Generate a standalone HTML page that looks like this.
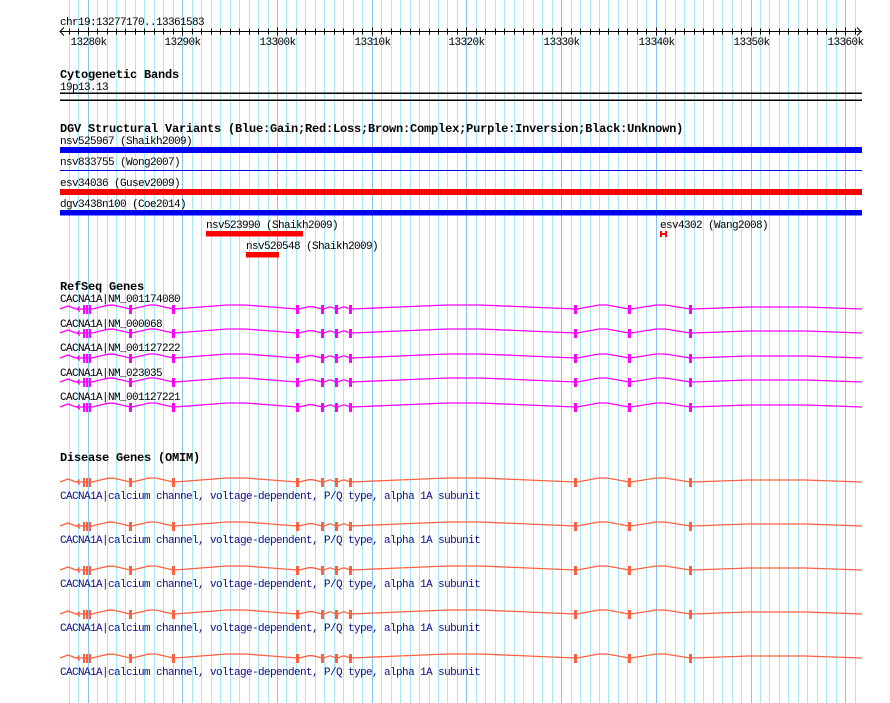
<!DOCTYPE html>
<html><head><meta charset="utf-8"><style>
html,body{margin:0;padding:0;background:#fff;width:890px;height:703px;overflow:hidden}
svg{display:block}
text{font-family:"Liberation Mono",monospace;font-size:11px;letter-spacing:-0.6px}
.b{font-weight:bold;font-size:12px;letter-spacing:-0.2px}
.d{fill:#10108a}
</style></head><body>
<svg id="s" width="890" height="703" xmlns="http://www.w3.org/2000/svg">
<g id="grid"></g>
<text x="60" y="25">chr19:13277170..13361583</text>
<line x1="60" y1="31.5" x2="862" y2="31.5" stroke="#000"/>
<polyline points="64,27.5 60,31.5 64,35.5" fill="none" stroke="#000"/>
<polyline points="857,27.5 861,31.5 857,35.5" fill="none" stroke="#000"/>
<g id="ruler"></g>
<text class="b" x="60" y="78">Cytogenetic Bands</text>
<text x="60" y="90">19p13.13</text>
<rect x="60" y="92.5" width="802" height="1.5" fill="#000"/>
<rect x="60" y="99.5" width="802" height="1.5" fill="#000"/>
<text class="b" x="60" y="132">DGV Structural Variants (Blue:Gain;Red:Loss;Brown:Complex;Purple:Inversion;Black:Unknown)</text>
<text x="60" y="144">nsv525967 (Shaikh2009)</text>
<rect x="60" y="147" width="802" height="6" fill="#0000f0"/>
<text x="60" y="165">nsv833755 (Wong2007)</text>
<rect x="60" y="170" width="802" height="1" fill="#0000f0"/>
<text x="60" y="186">esv34036 (Gusev2009)</text>
<rect x="60" y="189" width="802" height="6" fill="#f00"/>
<text x="60" y="207">dgv3438n100 (Coe2014)</text>
<rect x="60" y="210" width="802" height="5.5" fill="#0000f0"/>
<text x="206" y="228">nsv523990 (Shaikh2009)</text>
<rect x="206" y="231" width="97" height="5.5" fill="#f00"/>
<text x="246" y="249">nsv520548 (Shaikh2009)</text>
<rect x="246" y="252" width="33" height="5.5" fill="#f00"/>
<text x="660" y="228">esv4302 (Wang2008)</text>
<g fill="#f00"><rect x="660" y="231" width="2" height="6"/><rect x="665" y="231" width="2" height="6"/><rect x="660" y="233" width="7" height="2"/></g>
<text class="b" x="60" y="290">RefSeq Genes</text>
<text x="60" y="302">CACNA1A|NM_001174080</text>
<text x="60" y="327">CACNA1A|NM_000068</text>
<text x="60" y="351">CACNA1A|NM_001127222</text>
<text x="60" y="376">CACNA1A|NM_023035</text>
<text x="60" y="400">CACNA1A|NM_001127221</text>
<text class="b" x="60" y="461">Disease Genes (OMIM)</text>
<text class="d" x="60" y="499">CACNA1A|calcium channel, voltage-dependent, P/Q type, alpha 1A subunit</text>
<text class="d" x="60" y="543">CACNA1A|calcium channel, voltage-dependent, P/Q type, alpha 1A subunit</text>
<text class="d" x="60" y="587">CACNA1A|calcium channel, voltage-dependent, P/Q type, alpha 1A subunit</text>
<text class="d" x="60" y="631">CACNA1A|calcium channel, voltage-dependent, P/Q type, alpha 1A subunit</text>
<text class="d" x="60" y="675">CACNA1A|calcium channel, voltage-dependent, P/Q type, alpha 1A subunit</text>
<g id="genes"></g>
</svg>
<script>
var NS="http://www.w3.org/2000/svg";
function el(p,t,a){var e=document.createElementNS(NS,t);for(var k in a)e.setAttribute(k,a[k]);p.appendChild(e);return e;}
var g=document.getElementById('grid'),r=document.getElementById('ruler'),G=document.getElementById('genes');
var x0=87.6,step=9.47;
for(var n=-3;n<=82;n++){var x=Math.round(x0+n*step)+0.5;if(x<60||x>862)continue;
 var maj=(n%10==0);
 el(g,'line',{x1:x,y1:0,x2:x,y2:703,stroke:maj?'#88c4e8':'#a8e8f0','stroke-width':1});
 el(r,'line',{x1:x,y1:maj?27.5:28.5,x2:x,y2:maj?35.5:34.5,stroke:'#000'});
 if(maj){var t=el(r,'text',{x:x-18,y:45});t.textContent=(13280+n)+'k';}
}
var big=[130,173,297,322,336,350,575,629,690];
function gene(y,c){
 var pts=[[60,y],[68,y-3],[76,y]];
 var seq=[90].concat(big);
 for(var i=0;i<seq.length-1;i++){var a=seq[i]+2,b=seq[i+1];
  var h=Math.max(2,Math.min(4,(b-a)/10));var q=(b-a)/4;
  pts.push([a,y],[a+q,y-h*0.6],[a+2*q-q*0.3,y-h],[a+2*q+q*0.3,y-h],[b-q,y-h*0.6],[b,y]);}
 var a=692,b=862,q=(b-a)/6;
 pts.push([a,y],[a+q,y-1],[a+2*q,y-2],[a+4*q,y-2],[a+5*q,y-1],[b,y]);
 el(G,'polyline',{points:pts.map(function(p){return p[0].toFixed(1)+','+p[1].toFixed(1)}).join(' '),fill:'none',stroke:c,'stroke-width':1.3});
 el(G,'polyline',{points:'80,'+(y-2.5)+' 77,'+y+' 80,'+(y+2.5),fill:'none',stroke:c,'stroke-width':1.2});
 [83,86,89].forEach(function(x){el(G,'rect',{x:x,y:y-4,width:2,height:9,fill:c});});
 big.forEach(function(x){el(G,'rect',{x:x-1,y:y-4,width:3,height:9,fill:c});});
}
[309,333,358,382,407].forEach(function(y){gene(y,'#ff00ff');});
[482,526,570,614,658].forEach(function(y){gene(y,'#ff6040');});
</script>
</body></html>
